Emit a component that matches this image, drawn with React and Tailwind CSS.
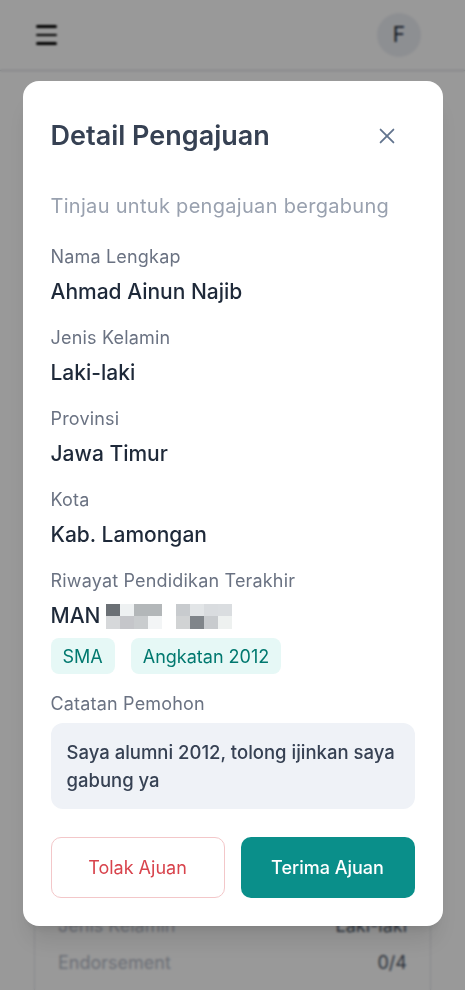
import React from 'react';

const fields = [
    { label: 'Nama Lengkap', value: 'Ahmad Ainun Najib' },
    { label: 'Jenis Kelamin', value: 'Laki-laki' },
    { label: 'Provinsi', value: 'Jawa Timur' },
    { label: 'Kota', value: 'Kab. Lamongan' },
];

// pixelated (censored) school name
const blurRows = [
    ['#6b7075', '#eef1f2', '#b3b7b9', '#b3b7b9', '#ffffff', '#c8cbce', '#e2e5e7', '#d9dcdf', '#dadde0'],
    ['#d6d8da', '#c5c6ca', '#c9ccce', '#f3f5f6', '#ffffff', '#d1d3d4', '#80858a', '#c8cbce', '#eef1f0'],
];

const Field = ({ label, children }) => (
    <div className="flex flex-col">
        <span className="text-[18px] leading-6 tracking-[0.01em] text-gray-500">{label}</span>
        <div className="mt-[9px] text-[21px] leading-7 font-medium text-gray-800">{children}</div>
    </div>
);

const BackgroundPage = () => (
    <div className="h-[990px] bg-white">
        {/* Top bar */}
        <header className="h-[71px] border-b border-gray-300 flex items-center justify-between pl-9 pr-[44px]">
            <div className="flex flex-col gap-[6px] w-[21px]">
                <span className="h-[2.5px] bg-black rounded" />
                <span className="h-[2.5px] bg-black rounded" />
                <span className="h-[2.5px] bg-black rounded" />
            </div>
            <div className="w-11 h-11 rounded-full bg-[#eceff4] flex items-center justify-center text-[21px] text-gray-800">
                F
            </div>
        </header>

        {/* Member card behind modal */}
        <div className="mx-[34px] mt-[24px] border border-gray-200 rounded-xl px-[23px] pt-[818px] pb-16 flex flex-col gap-[13px]">
            <div className="flex justify-between text-[18px] leading-6">
                <span className="text-[#b4b9c6]">Jenis Kelamin</span>
                <span className="text-gray-600">Laki-laki</span>
            </div>
            <div className="flex justify-between text-[18px] leading-6">
                <span className="text-[#b4b9c6]">Endorsement</span>
                <span className="text-gray-600">0/4</span>
            </div>
        </div>
    </div>
);

export default function App() {
    return (
        <div className="relative w-[465px] h-[990px] overflow-hidden" style={{ fontFamily: 'Inter, "Noto Sans", sans-serif' }}>
            <BackgroundPage />

            {/* Overlay */}
            <div className="absolute inset-0 bg-black/40 backdrop-blur-[1px] flex justify-center pt-[81px]">
                <div className="w-[420px] h-fit bg-white rounded-2xl px-7 pt-[39px] pb-7 shadow-xl">
                    <div className="flex items-center justify-between">
                        <h2 className="text-[27px] leading-8 font-semibold text-gray-700">Detail Pengajuan</h2>
                        <button className="mr-[17px] text-slate-500">
                            <svg width="22" height="22" viewBox="0 0 24 24" fill="none" stroke="currentColor" strokeWidth="2" strokeLinecap="round">
                                <path d="M5 5L19 19M19 5L5 19" />
                            </svg>
                        </button>
                    </div>

                    <p className="mt-[40px] text-[20px] leading-7 tracking-[0.015em] text-gray-400">Tinjau untuk pengajuan bergabung</p>

                    <div className="mt-[25px] flex flex-col gap-5">
                        {fields.map((f) => (
                            <Field key={f.label} label={f.label}>{f.value}</Field>
                        ))}
                        <div className="flex flex-col">
                            <span className="text-[18px] leading-6 tracking-[0.01em] text-gray-500">Riwayat Pendidikan Terakhir</span>
                            <div className="mt-[9px] flex items-center gap-[6px] text-[21px] leading-7 font-medium text-gray-800">
                                <span>MAN</span>
                                <div className="flex flex-col">
                                    {blurRows.map((row, i) => (
                                        <div key={i} className="flex">
                                            {row.map((c, j) => (
                                                <span key={j} className="w-[14px] h-[12.5px]" style={{ backgroundColor: c }} />
                                            ))}
                                        </div>
                                    ))}
                                </div>
                            </div>
                            <div className="mt-2 flex gap-4">
                                <span className="h-9 px-3 flex items-center rounded-lg bg-[#e6f8f6] text-[18px] text-teal-700">SMA</span>
                                <span className="h-9 px-3 flex items-center rounded-lg bg-[#e6f8f6] text-[18px] text-teal-700">Angkatan 2012</span>
                            </div>
                        </div>
                    </div>

                    <div className="mt-[18px]">
                        <span className="text-[18px] leading-6 tracking-[0.01em] text-gray-500">Catatan Pemohon</span>
                        <div className="mt-[7px] rounded-xl bg-[#eff2f7] px-4 py-[15px] text-[18.5px] leading-7 font-medium text-gray-700">
                            Saya alumni 2012, tolong ijinkan saya gabung ya
                        </div>
                    </div>

                    <div className="mt-7 grid grid-cols-2 gap-4">
                        <button className="h-[61px] rounded-[10px] border border-[#f3c7c9] text-[18px] text-[#d8434c]">
                            Tolak Ajuan
                        </button>
                        <button className="h-[61px] rounded-[10px] bg-[#0a8f8a] text-[18px] font-medium text-white">
                            Terima Ajuan
                        </button>
                    </div>
                </div>
            </div>
        </div>
    );
}
